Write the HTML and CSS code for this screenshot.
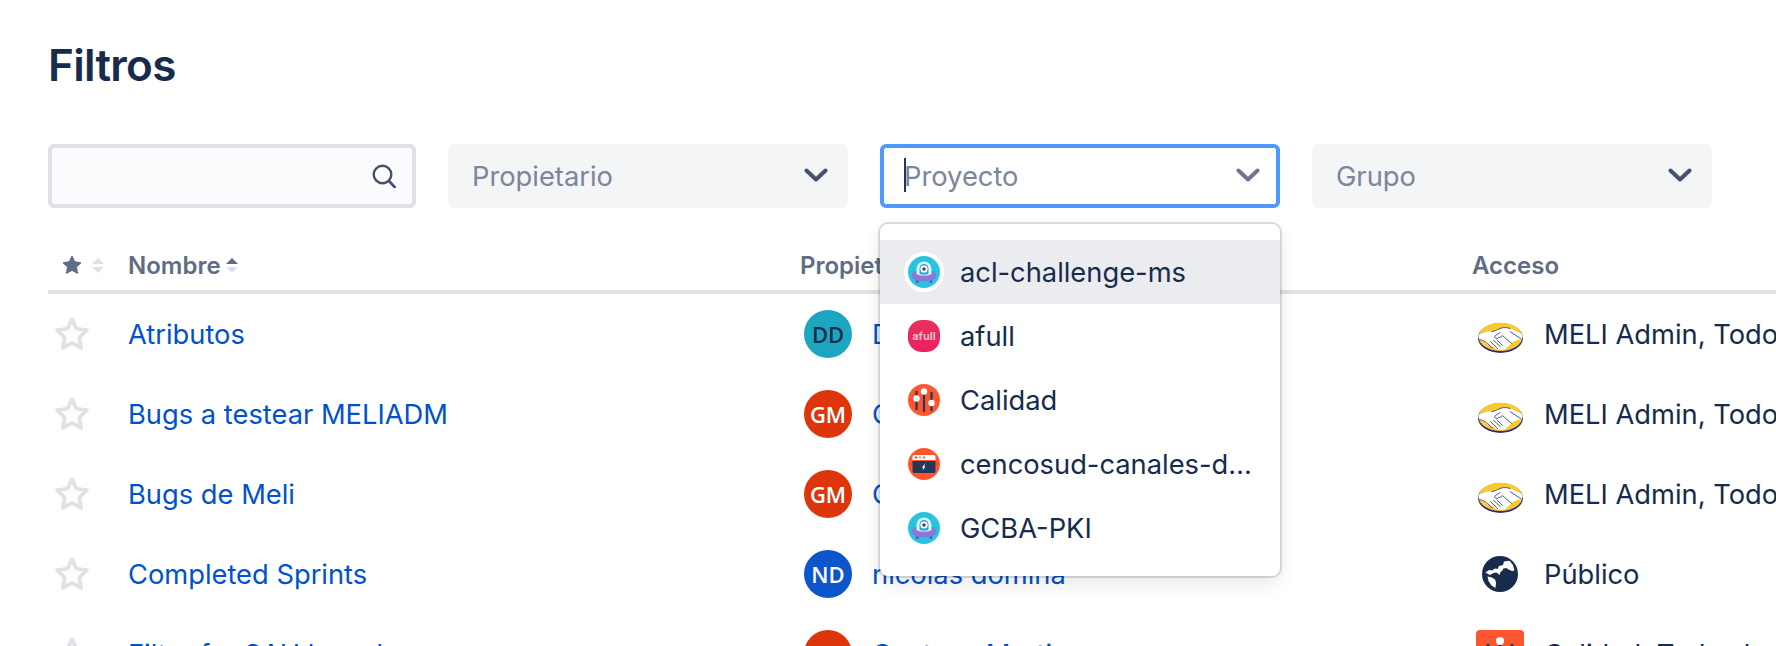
FILE: index.html
```html
<!DOCTYPE html>
<html lang="es">
<head>
<meta charset="utf-8">
<title>Filtros</title>
<link rel="stylesheet" href="styles.css">
</head>
<body>
<svg class="defs" width="0" height="0" aria-hidden="true">
  <defs>
    <symbol id="star" viewBox="1.200 1.200 31.600 31.600"><path d="M17 3.200l4.200 8.900 9.600 1.300-7 6.800 1.700 9.700-8.500-4.700-8.500 4.700 1.700-9.700-7-6.800 9.600-1.300z" fill="none" stroke="#dfe1e6" stroke-width="3.400" stroke-linejoin="round"/></symbol>
    <symbol id="chev" viewBox="0 0 24 14"><path d="M2.500 2.500L12 11.500l9.500-9" fill="none" stroke="currentColor" stroke-width="4" stroke-linecap="round" stroke-linejoin="round"/></symbol>
    <symbol id="monster" viewBox="0 0 32 32">
      <circle cx="16" cy="16" r="16" fill="#26c4e2"/>
      <rect x="8" y="21" width="2.500" height="6" fill="#6554c0"/><rect x="21.500" y="21" width="2.500" height="6" fill="#6554c0"/>
      <ellipse cx="16" cy="19.500" rx="12.500" ry="6" fill="#8a79d8"/>
      <path d="M8.500 18V13a7.500 7.500 0 0 1 15 0v5c-4 2-11 2-15 0z" fill="#e6fafc"/>
      <path d="M11.500 18v-5.500a4.500 4.500 0 0 1 9 0V18c-3 1-6 1-9 0z" fill="#2aa7d6"/>
      <circle cx="16" cy="13" r="3.600" fill="#fff"/><circle cx="16" cy="13" r="1.700" fill="#403294"/>
    </symbol>
    <symbol id="sliders" viewBox="0 0 32 32">
      <circle cx="16" cy="16" r="16" fill="#ff5630"/>
      <path d="M8.500 7v19M16 4v24M23.500 8v19" stroke="#253858" stroke-width="2.200"/>
      <circle cx="8.500" cy="14.500" r="3.200" fill="#fff"/><circle cx="16" cy="7.500" r="3.200" fill="#fff"/><circle cx="23.500" cy="19" r="3.200" fill="#fff"/>
    </symbol>
    <symbol id="hands" viewBox="0 0 45 31">
      <ellipse cx="22.500" cy="16" rx="22.500" ry="15" fill="#2d3277"/>
      <ellipse cx="22.500" cy="14.900" rx="21.900" ry="14.100" fill="#fcc82e"/>
      <path d="M.6 13C6 10 10 9 14 9.500c2.500 0 4.500-1.500 8-3 4-1.500 7-1 10 0 4 1.500 8 3.700 12.400 6 .3 1.500.2 3-.5 4.500-4 .5-7 1.500-9.500 3.500l-7 6.500c-2.500 1.500-6 1.500-8.500 0L8 21.500C5 19 3 18.500 1.200 17.500.7 16 .5 14.500.6 13z" fill="#fff"/>
      <path d="M14 9.500c2.500 0 4.500-1.500 8-3 4-1.500 7-1 10 0M22 10.500l-5 3.500c-1.200 1.500.8 3 3 2.200l4.500-2.500 9.500 8M32 9.500l6 4 5.500 3.500M1.500 17.500c3 .5 5.500 2 8 4l5 4.500M12.500 19.500l7 7M15.500 18l7 7M19 18l5.500 5.500" fill="none" stroke="#2d3277" stroke-width=".8" stroke-linecap="round"/>
    </symbol>
  </defs>
</svg>
<main class="page">
  <h1 class="title">Filtros</h1>

  <div class="filters">
    <label class="search">
      <svg class="search-icon" viewBox="0 0 24 24"><circle cx="10.500" cy="10.500" r="8.800" fill="none" stroke="#42526e" stroke-width="2.400"/><path d="M17 17l6 6.500" stroke="#42526e" stroke-width="2.600" stroke-linecap="round"/></svg>
    </label>
    <div class="select"><span class="placeholder">Propietario</span><svg class="chevron"><use href="#chev"/></svg></div>
    <div class="select select-focus">
      <span class="caret"></span><span class="placeholder">Proyecto</span><svg class="chevron"><use href="#chev"/></svg>
      <ul class="menu">
        <li class="option option-active"><span class="option-icon"><svg><use href="#monster"/></svg></span><span class="option-name">acl-challenge-ms</span></li>
        <li class="option"><span class="option-icon"><svg viewBox="0 0 32 32"><defs><linearGradient id="pink" x1="0" y1="0" x2="0" y2="1"><stop offset="0" stop-color="#e9315b"/><stop offset="1" stop-color="#ec1f63"/></linearGradient></defs><rect width="32" height="32" rx="14" fill="url(#pink)"/><text x="16" y="20" class="afull-text">afull</text></svg></span><span class="option-name">afull</span></li>
        <li class="option"><span class="option-icon"><svg><use href="#sliders"/></svg></span><span class="option-name">Calidad</span></li>
        <li class="option"><span class="option-icon"><svg viewBox="0 0 32 32"><circle cx="16" cy="16" r="16" fill="#ff5630"/><path d="M4.500 9a2 2 0 0 1 2-2h19a2 2 0 0 1 2 2v3h-23z" fill="#fff"/><path d="M4.500 13h23v10a2 2 0 0 1-2 2h-19a2 2 0 0 1-2-2z" fill="#253858"/><circle cx="8" cy="9.500" r="1.200" fill="#ff5630"/><circle cx="12" cy="9.500" r="1.200" fill="#ffab00"/><circle cx="16" cy="9.500" r="1.200" fill="#26c4e2"/><path d="M17.500 15l-1.500 3.500h1.500l-3 4 .8-3h-1.500z" fill="#fff"/></svg></span><span class="option-name">cencosud-canales-digitales</span></li>
        <li class="option"><span class="option-icon"><svg><use href="#monster"/></svg></span><span class="option-name">GCBA-PKI</span></li>
      </ul>
    </div>
    <div class="select"><span class="placeholder">Grupo</span><svg class="chevron"><use href="#chev"/></svg></div>
  </div>

  <section class="table">
    <div class="head">
      <div class="head-star">
        <svg class="star-solid" viewBox="0 0 20 20"><path d="M10 1l2.800 5.800 6.200.9-4.500 4.400 1.100 6.300L10 15.400l-5.600 3 1.100-6.300L1 7.700l6.200-.9z" fill="#5e6c84" stroke="#5e6c84" stroke-linejoin="round"/></svg>
        <span class="sort"><i class="up"></i><i class="down"></i></span>
      </div>
      <div class="head-cell">Nombre<span class="sort"><i class="up up-on"></i><i class="down"></i></span></div>
      <div class="head-cell">Propietario</div>
      <div class="head-cell">Acceso</div>
    </div>

    <div class="row">
      <svg class="fav"><use href="#star"/></svg>
      <a class="link">Atributos</a>
      <div class="owner"><span class="avatar avatar-teal">DD</span><a class="link">Diego Dominguez</a></div>
      <div class="access"><span class="access-icon"><svg class="hands"><use href="#hands"/></svg></span><span>MELI Admin, Todos los usuarios</span></div>
    </div>
    <div class="row">
      <svg class="fav"><use href="#star"/></svg>
      <a class="link">Bugs a testear MELIADM</a>
      <div class="owner"><span class="avatar avatar-red">GM</span><a class="link">Gustavo Martin</a></div>
      <div class="access"><span class="access-icon"><svg class="hands"><use href="#hands"/></svg></span><span>MELI Admin, Todos los usuarios</span></div>
    </div>
    <div class="row">
      <svg class="fav"><use href="#star"/></svg>
      <a class="link">Bugs de Meli</a>
      <div class="owner"><span class="avatar avatar-red">GM</span><a class="link">Gustavo Martin</a></div>
      <div class="access"><span class="access-icon"><svg class="hands"><use href="#hands"/></svg></span><span>MELI Admin, Todos los usuarios</span></div>
    </div>
    <div class="row">
      <svg class="fav"><use href="#star"/></svg>
      <a class="link">Completed Sprints</a>
      <div class="owner"><span class="avatar avatar-blue">ND</span><a class="link">nicolas domina</a></div>
      <div class="access"><span class="access-icon"><svg class="globe" viewBox="0 0 36 36"><circle cx="18" cy="18" r="18" fill="#172b4d"/><path d="M3.300 16.500L7 14l3 .5 3-2 2.500.5 1.500-3 4-1 1-3.500 5.500-.8 3.500 4.300 1.500 5.500-2.500.5-3.500-1.500-2-1.500-3 .5-1.500 2.500-1.500 1-1 3-3-2.500-3 .5-3.500 2zM5.500 20.500l4.500 1 3 2 1 3-.5 5.500-4-2.500-3-4.500z" fill="#fff"/></svg></span><span>Público</span></div>
    </div>
    <div class="row">
      <svg class="fav"><use href="#star"/></svg>
      <a class="link">Filter for SAU board</a>
      <div class="owner"><span class="avatar avatar-red">GM</span><a class="link">Gustavo Martin</a></div>
      <div class="access"><span class="access-icon"><svg class="square" viewBox="0 0 48 48"><rect width="48" height="48" rx="4" fill="#ff5630"/><path d="M12 14v28M24 8v34M36 14v28" stroke="#253858" stroke-width="3"/><circle cx="24" cy="11" r="4" fill="#fff"/></svg></span><span>Calidad, Todos los usuarios</span></div>
    </div>
  </section>
</main>
</body>
</html>
```
FILE: styles.css
```css
* { box-sizing: border-box; }

html, body {
  margin: 0;
  height: 100%;
  overflow: hidden;
  background: #fff;
}

body {
  font-family: Inter, "Liberation Sans", sans-serif;
  font-size: 27.3px;
  color: #172b4d;
}

.defs { display: block; height: 0; }

.page { padding: 40px 0 0 48px; width: 1776px; }

.title {
  margin: 0 0 54px;
  font-size: 44px;
  line-height: 50px;
  font-weight: 600;
  letter-spacing: -0.7px;
  color: #172b4d;
}

.filters { display: flex; gap: 32px; height: 64px; }

.search {
  flex: 0 0 368px;
  display: flex;
  align-items: center;
  justify-content: flex-end;
  padding-right: 16px;
  background: #fafbfc;
  border: 4px solid #dfe1e6;
  border-radius: 6px;
}

.search-icon { width: 24px; height: 24px; }

.select {
  position: relative;
  flex: 0 0 400px;
  display: flex;
  align-items: center;
  padding: 0 20px 0 24px;
  background: #f4f5f7;
  border-radius: 6px;
  color: #42526e;
}

.select-focus {
  background: #fff;
  border: 4px solid #4c9aff;
  padding: 0 16px 0 20px;
  color: #6b778c;
}

.placeholder { color: #7a869a; }

.caret {
  position: absolute;
  left: 20px;
  top: 10px;
  width: 2px;
  height: 34px;
  background: #253858;
}

.chevron {
  width: 24px;
  height: 14px;
  margin-left: auto;
  margin-top: -2px;
}

.menu {
  position: absolute;
  left: -4px;
  right: -4px;
  top: calc(100% + 20px);
  margin: 0;
  padding: 16px 0;
  list-style: none;
  background: #fff;
  border-radius: 8px;
  box-shadow: 0 0 0 2px rgba(0, 0, 0, 0.13), 0 7px 19px rgba(0, 0, 0, 0.1);
  z-index: 5;
}

.option {
  display: flex;
  align-items: center;
  gap: 16px;
  height: 64px;
  padding: 0 24px;
  color: #172b4d;
}

.option-active { background: #ebecf0; }

.option-icon {
  flex: none;
  width: 40px;
  height: 40px;
  padding: 4px;
  background: #fff;
  border-radius: 50%;
}

.option-icon svg { display: block; width: 32px; height: 32px; }

.afull-text {
  font-size: 11px;
  font-weight: 700;
  fill: #f7b9c9;
  text-anchor: middle;
}

.option-name {
  min-width: 0;
  overflow: hidden;
  white-space: nowrap;
  text-overflow: ellipsis;
}

.table { margin-top: 16px; width: 1728px; }

.head, .row {
  display: grid;
  grid-template-columns: 80px 672px 672px 304px;
  align-items: center;
}

.head {
  height: 70px;
  padding-top: 16px;
  border-bottom: 4px solid #dfe1e6;
  color: #5e6c84;
  font-size: 24px;
  font-weight: 600;
}

.head-star { display: flex; align-items: center; gap: 10px; padding-left: 14px; }
.star-solid { width: 20px; height: 20px; }
.head-cell { display: flex; align-items: center; gap: 5px; white-space: nowrap; }

.sort { display: inline-flex; flex-direction: column; gap: 3px; }
.up, .down { display: block; width: 0; height: 0; border-left: 6px solid transparent; border-right: 6px solid transparent; }
.up { border-bottom: 6px solid #dfe1e6; }
.up-on { border-bottom-color: #5e6c84; }
.down { border-top: 6px solid #dfe1e6; }

.row { height: 80px; }

.fav { width: 34px; height: 34px; margin-left: 7px; }

.link { color: #0052cc; white-space: nowrap; }

.owner, .access {
  display: flex;
  align-items: center;
  gap: 20px;
  padding-left: 4px;
  white-space: nowrap;
  overflow: hidden;
}

.avatar {
  flex: none;
  display: flex;
  align-items: center;
  justify-content: center;
  width: 48px;
  height: 48px;
  border-radius: 50%;
  font-family: "Open Sans", sans-serif;
  font-size: 22px;
  font-weight: 600;
  color: #fff;
}

.avatar-teal { background: #1ca6c0; color: #172b4d; }
.avatar-red { background: #de350b; }
.avatar-blue { background: #0c55cc; }

.access-icon {
  flex: none;
  display: flex;
  align-items: center;
  justify-content: center;
  width: 48px;
  height: 48px;
}

.hands { width: 45px; height: 31px; margin-top: 6px; }
.globe { width: 36px; height: 36px; }
.square { width: 48px; height: 48px; }
```
